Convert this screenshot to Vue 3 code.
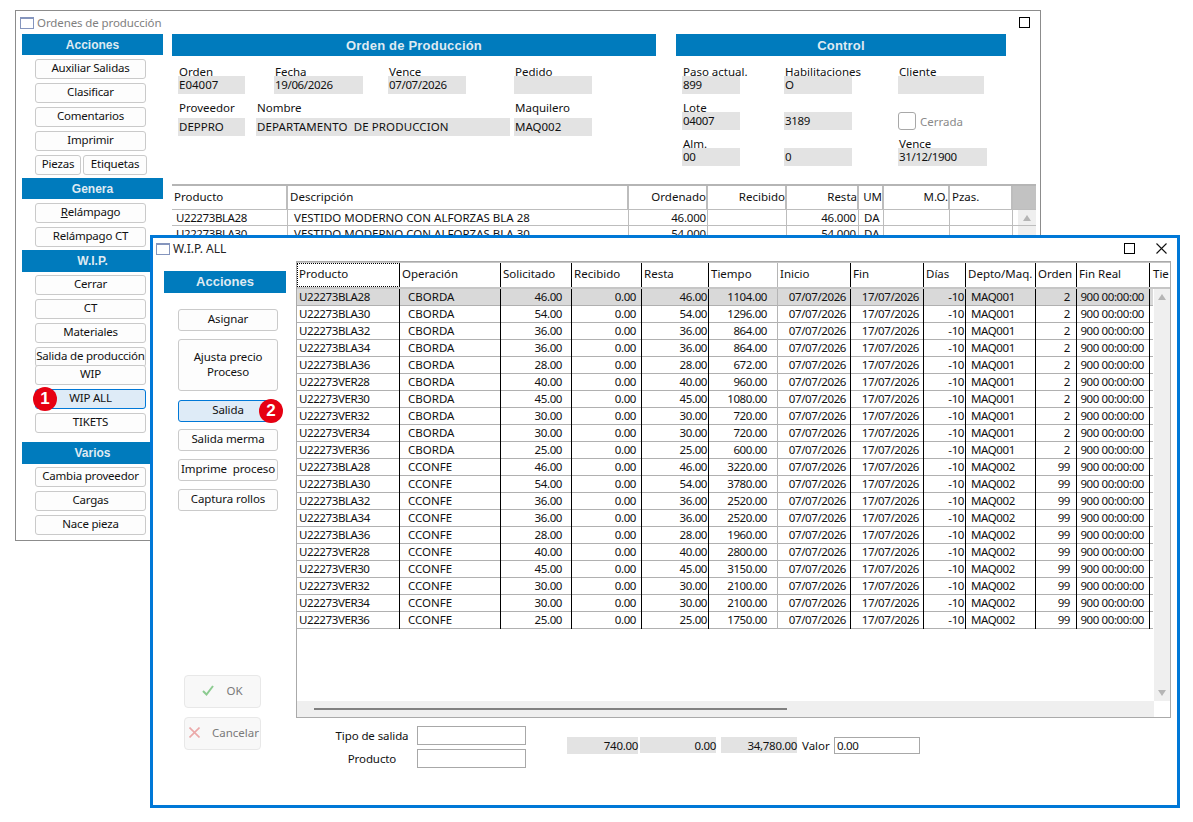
<script setup>
const acciones = ['Auxiliar Salidas', 'Clasificar', 'Comentarios', 'Imprimir']
const wipTop = ['Cerrar', 'CT', 'Materiales']
const varios = ['Cambia proveedor', 'Cargas', 'Nace pieza']

const ordenRows = [
  [
    { label: 'Orden', value: 'E04007', width: 67, left: 6 },
    { label: 'Fecha', value: '19/06/2026', width: 89, left: 29 },
    { label: 'Vence', value: '07/07/2026', width: 78, left: 25 },
    { label: 'Pedido', value: '', width: 78, left: 48 }
  ],
  [
    { label: 'Proveedor', value: 'DEPPRO', width: 67, left: 6 },
    { label: 'Nombre', value: 'DEPARTAMENTO  DE PRODUCCION', width: 254, left: 11 },
    { label: 'Maquilero', value: 'MAQ002', width: 78, left: 4 }
  ]
]

const isDate = (v) => /^[\d/]+$/.test(v)

const topHead = ['Producto', 'Descripción', 'Ordenado', 'Recibido', 'Resta', 'UM', 'M.O.', 'Pzas.']
const topRows = [
  ['U22273BLA28', 'VESTIDO MODERNO CON ALFORZAS BLA 28', '46.000', '', '46.000', 'DA', '', ''],
  ['U22273BLA30', 'VESTIDO MODERNO CON ALFORZAS BLA 30', '54.000', '', '54.000', 'DA', '', '']
]

const wipHead = ['Producto', 'Operación', 'Solicitado', 'Recibido', 'Resta', 'Tiempo', 'Inicio', 'Fin', 'Días', 'Depto/Maq.', 'Orden', 'Fin Real', 'Tie']
const tallas = [
  ['BLA28', 46], ['BLA30', 54], ['BLA32', 36], ['BLA34', 36], ['BLA36', 28],
  ['VER28', 40], ['VER30', 45], ['VER32', 30], ['VER34', 30], ['VER36', 25]
]

function makeRows(operacion, factor, maq, orden) {
  return tallas.map(([t, qty]) => [
    'U22273' + t, operacion, qty.toFixed(2), '0.00', qty.toFixed(2), (qty * factor).toFixed(2),
    '07/07/2026', '17/07/2026', '-10', maq, orden, '900 00:00:00'
  ])
}

const wipRows = [...makeRows('CBORDA', 24, 'MAQ001', '2'), ...makeRows('CCONFE', 70, 'MAQ002', '99')]
</script>

<template>
  <div class="desk">
    <!-- ventana de atras -->
    <section class="win win-back">
      <header class="titlebar back-title">
        <span class="win-icon"></span>
        <span class="title-text">Ordenes de producción</span>
        <span class="max-box"></span>
      </header>
      <div class="back-body">
        <aside class="side">
          <h3 class="band">Acciones</h3>
          <button v-for="b in acciones" :key="b" class="btn">{{ b }}</button>
          <div class="btn-pair">
            <button class="btn btn-piezas">Piezas</button>
            <button class="btn btn-etiq">Etiquetas</button>
          </div>
          <h3 class="band band-next">Genera</h3>
          <button class="btn"><span><u>R</u>elámpago</span></button>
          <button class="btn">Relámpago CT</button>
          <h3 class="band band-next band-tall">W.I.P.</h3>
          <button v-for="b in wipTop" :key="b" class="btn btn-snug">{{ b }}</button>
          <button class="btn">Salida de producción</button>
          <button class="btn btn-over">WIP</button>
          <button class="btn btn-on btn-badge">WIP ALL<span class="badge badge-1">1</span></button>
          <button class="btn">TIKETS</button>
          <h3 class="band band-varios">Varios</h3>
          <button v-for="b in varios" :key="b" class="btn btn-snug">{{ b }}</button>
        </aside>

        <div class="back-main">
          <div class="panels">
            <div class="panel-orden">
              <h3 class="band band-big">Orden de Producción</h3>
              <div class="field-rows">
                <div v-for="(row, i) in ordenRows" :key="i" class="field-row" :class="{ 'row-gap': i > 0 }">
                  <div v-for="f in row" :key="f.label" class="field" :style="{ width: f.width + 'px', marginLeft: f.left + 'px' }">
                    <label class="lbl">{{ f.label }}</label>
                    <div class="val" :class="{ 'val-low': i > 0, 'val-num': isDate(f.value), 'val-wide': f.label === 'Nombre' }">{{ f.value }}</div>
                  </div>
                </div>
              </div>
            </div>
            <div class="panel-control">
              <h3 class="band band-big">Control</h3>
              <div class="control-grid">
                <div class="field"><label class="lbl">Paso actual.</label><div class="val val-num">899</div></div>
                <div class="field"><label class="lbl">Habilitaciones</label><div class="val">O</div></div>
                <div class="field f-cliente"><label class="lbl">Cliente</label><div class="val"></div></div>
                <div class="field"><label class="lbl">Lote</label><div class="val val-num">04007</div></div>
                <div class="field"><label class="lbl">&nbsp;</label><div class="val val-num">3189</div></div>
                <div class="check-row"><span class="check"></span><span class="check-text">Cerrada</span></div>
                <div class="field"><label class="lbl">Alm.</label><div class="val val-num">00</div></div>
                <div class="field"><label class="lbl">&nbsp;</label><div class="val val-num">0</div></div>
                <div class="field f-vence"><label class="lbl">Vence</label><div class="val val-num">31/12/1900</div></div>
              </div>
            </div>
          </div>

          <div class="top-table">
            <div class="top-row top-head">
              <div v-for="h in topHead" :key="h" class="tc">{{ h }}</div>
              <div class="top-corner"></div>
            </div>
            <div v-for="(r, i) in topRows" :key="i" class="top-row top-data">
              <div v-for="(c, j) in r" :key="j" class="tc">{{ c }}</div>
              <div class="top-scroll"><span v-if="i === 0" class="arrow-up"></span></div>
            </div>
          </div>
        </div>
      </div>
    </section>

    <!-- ventana W.I.P. ALL -->
    <section class="win win-front">
      <header class="titlebar front-title">
        <span class="win-icon"></span>
        <span class="title-text dark">W.I.P. ALL</span>
        <span class="max-box front-max"></span>
        <svg class="close-x" width="11" height="11" viewBox="0 0 11 11"><path d="M0.5 0.5L10.5 10.5M10.5 0.5L0.5 10.5" stroke="#111" stroke-width="1.1" fill="none" /></svg>
      </header>
      <div class="front-body">
        <aside class="front-side">
          <h3 class="band band-front">Acciones</h3>
          <button class="btn2 first">Asignar</button>
          <button class="btn2 tall">Ajusta precio<br />Proceso</button>
          <button class="btn2 btn-on sal">Salida<span class="badge badge-2">2</span></button>
          <button class="btn2 merma">Salida merma</button>
          <button class="btn2">Imprime&nbsp; proceso</button>
          <button class="btn2">Captura rollos</button>
          <button class="btn-off ok-btn">
            <svg width="12" height="11" viewBox="0 0 12 11"><path d="M1 6L4.5 9.5L11 1" stroke="#8ccb90" stroke-width="2" fill="none" /></svg>
            <span>OK</span>
          </button>
          <button class="btn-off cancel-btn">
            <svg width="11" height="11" viewBox="0 0 11 11"><path d="M0.5 0.5L10.5 10.5M10.5 0.5L0.5 10.5" stroke="#eba9a9" stroke-width="1.6" fill="none" /></svg>
            <span>Cancelar</span>
          </button>
        </aside>

        <div class="front-main">
          <div class="grid-box">
            <div class="grid-area">
              <div class="g-row g-head">
                <div v-for="(h, i) in wipHead" :key="h" class="gc" :class="{ 'gc-focus': i === 0 }">{{ h }}</div>
              </div>
              <div v-for="(r, i) in wipRows" :key="i" class="g-row g-data" :class="{ 'g-sel': i === 0 }">
                <div v-for="(c, j) in r" :key="j" class="gc">{{ c }}</div>
              </div>
            </div>
            <div class="v-scroll"><span class="arrow-up"></span><span class="arrow-down"></span></div>
            <div class="h-scroll"><span class="h-thumb"></span></div>
          </div>

          <div class="foot">
            <div class="foot-form">
              <label class="foot-lbl">Tipo de salida</label><div class="foot-input"></div>
              <label class="foot-lbl">Producto</label><div class="foot-input"></div>
            </div>
            <div class="totals">
              <div class="total t1">740.00</div>
              <div class="total t2">0.00</div>
              <div class="total t3">34,780.00</div>
              <span class="valor">Valor</span>
              <div class="valor-input">0.00</div>
            </div>
          </div>
        </div>
      </div>
    </section>
  </div>
</template>

<style>
html, body { background: #fff; }
</style>

<style scoped>
.desk {
  position: relative;
  width: 1193px;
  height: 822px;
  overflow: hidden;
  background: #fff;
  font-family: "Noto Sans", "Liberation Sans", sans-serif;
  font-size: 11.5px;
  color: #111;
}
.win { position: absolute; box-sizing: border-box; background: #fff; overflow: hidden; }
.win-back { left: 15px; top: 10px; width: 1026px; height: 531px; border: 1px solid #8c8c8c; }
.win-front { left: 150px; top: 235px; width: 1030px; height: 573px; border: 3px solid #0078d7; }

.titlebar { display: flex; align-items: center; }
.back-title { height: 23px; padding-left: 4px; }
.front-title { height: 21px; padding-left: 3px; }
.win-icon {
  width: 14px; height: 12px; box-sizing: border-box; flex: none;
  border: 1px solid #8595bd; border-top-width: 2px; background: #fff;
}
.title-text { margin-left: 3px; color: #808080; letter-spacing: -0.1px; }
.title-text.dark { color: #222; font-size: 12px; letter-spacing: 0; }
.max-box { margin-left: auto; margin-right: 10px; width: 11px; height: 11px; box-sizing: border-box; border: 1px solid #000; }
.front-max { margin-right: 21px; }
.close-x { margin-right: 10px; flex: none; }

.back-body { display: flex; }
.side { width: 141px; margin-left: 6px; display: flex; flex-direction: column; align-items: flex-start; flex: none; }
.band {
  margin: 0; width: 100%; height: 21px; line-height: 22px; text-align: center;
  background: #007bbd; color: #dfeaf2;
  font-family: "Liberation Sans", Arial, sans-serif; font-size: 12px; font-weight: 700;
}
.band-next { margin-top: 3px; }
.band-tall { height: 22px; line-height: 23px; margin-bottom: -1px; }
.band-varios { margin-top: 9px; height: 22px; line-height: 23px; margin-bottom: -1px; }
.band-big { height: 22px; line-height: 23px; font-size: 13px; letter-spacing: 0.2px; }
.band-front { margin-left: 11px; width: 122px; height: 22px; line-height: 22px; font-size: 13px; }

.btn, .btn2, .btn-off {
  box-sizing: border-box; font: inherit; color: inherit; padding: 0;
  background: #fdfdfd; border: 1px solid #cacaca; border-radius: 3px;
  white-space: nowrap; display: flex; align-items: center; justify-content: center;
}
.btn { margin: 4px 0 0 13px; width: 111px; height: 20px; flex: none; padding-bottom: 3px; letter-spacing: -0.2px; }
.btn-over { margin-top: -2px; position: relative; }
.btn-pair { display: flex; gap: 2px; margin: 4px 0 0 13px; }
.btn-pair .btn { margin: 0; }
.btn-pair .btn-piezas { width: 46px; }
.btn-pair .btn-etiq { width: 64px; }
.btn-on { background: #deebf7; border-color: #0078d7; position: relative; overflow: visible; }
.badge {
  position: absolute; width: 24px; height: 24px; border-radius: 50%; background: #e60012; color: #fff;
  font-family: "Liberation Sans", Arial, sans-serif; font-weight: 700; font-size: 17px; line-height: 24px; text-align: center;
  letter-spacing: 0;
}
.badge-1 { left: -3px; top: -3px; }
.badge-2 { right: -6px; top: -2px; }

.back-main { margin-left: 9px; width: 864px; flex: none; }
.panels { display: flex; gap: 20px; height: 150px; }
.panel-orden { width: 484px; }
.panel-control { width: 330px; }
.field-rows { padding-top: 9px; }
.field-row { display: flex; }
.row-gap { margin-top: 7px; }
.field { box-sizing: border-box; }
.lbl { display: block; height: 14px; line-height: 14px; padding-left: 1px; white-space: nowrap; position: relative; z-index: 1; }
.val {
  height: 18px; line-height: 18px; margin-top: -3px; padding-left: 1px;
  background: #e3e3e3; white-space: pre; overflow: hidden;
}
.val-low { margin-top: 3px; }
.val-num { letter-spacing: -0.35px; }
.val-wide { letter-spacing: 0.1px; }

.control-grid {
  display: grid; grid-template-columns: 102px 114px 89px; grid-template-rows: 29px 29px 29px;
  row-gap: 7px; padding: 9px 0 0 6px;
}
.control-grid .field:nth-child(3n+1) .val { width: 57px; }
.control-grid .field:nth-child(3n+2) .val { width: 67px; }
.f-cliente .val { width: 85px; }
.check-row { display: flex; align-items: center; gap: 4px; padding-top: 11px; }
.check { width: 18px; height: 18px; box-sizing: border-box; border: 1px solid #a8a8a8; border-radius: 3px; }
.check-text { color: #8a8a8a; }

.top-table { width: 864px; border-top: 2px solid #b5b5b5; }
.top-row {
  display: grid; grid-template-columns: 116px 341px 79px 79px 72px 25px 66px 63px 23px;
  height: 16px; border-bottom: 1px solid #bdbdbd; box-sizing: border-box;
}
.top-head { height: 24px; }
.tc { border-right: 1px solid #bdbdbd; padding: 0 2px; white-space: nowrap; overflow: hidden; line-height: 15px; }
.top-head .tc { line-height: 22px; border-right-width: 2px; }
.top-head .tc:nth-child(3), .top-head .tc:nth-child(4), .top-head .tc:nth-child(5), .top-head .tc:nth-child(7) { text-align: right; padding-right: 0; }
.top-head .tc:nth-child(6) { padding: 0; text-align: right; }
.top-data .tc:nth-child(1) { padding-left: 4px; letter-spacing: -0.4px; }
.top-data .tc:nth-child(2) { padding-left: 6px; }
.top-data .tc:nth-child(3), .top-data .tc:nth-child(5) { text-align: right; padding-right: 1px; letter-spacing: -0.2px; }
.top-data .tc:nth-child(5) { padding-right: 2px; }
.top-data .tc:nth-child(6) { padding-left: 5px; }
.top-corner { background: #c2c2c2; }
.top-scroll { background: #efefef; position: relative; margin-left: 5px; }

.arrow-up, .arrow-down { position: absolute; left: 50%; margin-left: -4px; width: 0; height: 0; border-left: 4px solid transparent; border-right: 4px solid transparent; }
.arrow-up { top: 5px; border-bottom: 6px solid #b5b5b5; }
.arrow-down { bottom: 5px; border-top: 6px solid #b5b5b5; }

.front-body { display: flex; }
.front-side { width: 143px; flex: none; display: flex; flex-direction: column; align-items: flex-start; padding-top: 12px; }
.btn2 { width: 100px; height: 22px; margin: 8px 0 0 25px; flex: none; padding-bottom: 4px; letter-spacing: -0.1px; }
.btn2.first { margin-top: 16px; }
.btn2.tall { height: 52px; line-height: 15px; text-align: center; padding-bottom: 2px; }
.btn2.sal { margin-top: 9px; }
.btn2.merma { margin-top: 7px; }
.btn-off {
  width: 77px; height: 33px; margin-left: 31px; gap: 12px; flex: none; padding-bottom: 3px;
  background: #f8f8f8; border-color: #e8e8e8; color: #7a7a7a; border-radius: 4px;
}
.ok-btn { margin-top: 164px; }
.cancel-btn { margin-top: 9px; justify-content: flex-start; padding-left: 4px; }

.front-main { flex: 1; min-width: 0; padding-top: 2px; }
.grid-box {
  box-sizing: border-box; width: 875px; height: 457px; border: 1px solid #aaa;
  display: grid; grid-template-columns: 857px 1fr; grid-template-rows: 439px 1fr;
}
.grid-area { grid-column: 1 / 3; grid-row: 1; overflow: hidden; }
.g-row {
  display: grid; height: 17px; box-sizing: border-box; border-bottom: 1px solid #b0b0b0;
  grid-template-columns: 103px 101px 71px 70px 67px 69px 73px 73px 42px 70px 41px 73px 20px;
}
.g-data { width: 856px; grid-template-columns: 103px 101px 71px 70px 67px 69px 73px 73px 42px 70px 41px 73px; }
.g-head { height: 27px; border-bottom: 2px solid #c6c6c6; border-top: 1px solid #c6c6c6; }
.gc { box-sizing: border-box; border-right: 1px solid #000; line-height: 16px; white-space: nowrap; overflow: hidden; margin-bottom: -1px; padding-left: 2px; letter-spacing: -0.4px; }
.g-head .gc { line-height: 22px; padding-left: 2px; margin-bottom: 0; letter-spacing: 0; }
.gc-focus { outline: 1px dotted #000; outline-offset: -1px; }
.g-head .gc:nth-child(13) { border-right: none; padding-left: 3px; }
.gc:nth-child(6) { border-right-color: #b5b5b5; }
.g-data .gc:nth-child(2) { padding-left: 8px; letter-spacing: 0; }
.g-data .gc:nth-child(3) { text-align: right; padding-right: 9px; }
.g-data .gc:nth-child(4) { text-align: right; padding-right: 5px; }
.g-data .gc:nth-child(5) { text-align: right; padding-right: 1px; }
.g-data .gc:nth-child(6) { text-align: right; padding-right: 10px; }
.g-data .gc:nth-child(7) { text-align: right; padding-right: 4px; }
.g-data .gc:nth-child(8) { text-align: right; padding-right: 4px; }
.g-data .gc:nth-child(9) { text-align: right; padding-right: 1px; }
.g-data .gc:nth-child(10) { padding-left: 5px; }
.g-data .gc:nth-child(11) { text-align: right; padding-right: 6px; }
.g-data .gc:nth-child(12) { text-align: right; padding-right: 5px; }
.g-sel { background: #d9d9d9; }
.v-scroll { grid-column: 2; grid-row: 1; background: #efefef; position: relative; margin-top: 27px; }
.h-scroll { grid-column: 1; grid-row: 2; background: #efefef; display: flex; align-items: center; padding-left: 17px; }
.h-thumb { width: 473px; height: 2px; background: #808080; }

.foot { display: flex; align-items: flex-start; margin-top: 8px; }
.foot-form { display: grid; grid-template-columns: 87px 109px; margin-left: 34px; row-gap: 4px; align-items: center; }
.foot-lbl { text-align: center; padding-right: 3px; letter-spacing: -0.1px; }
.foot-input { height: 19px; box-sizing: border-box; border: 1px solid #a8a8a8; background: #fff; }
.totals { display: flex; margin-left: 41px; margin-top: 11px; align-items: flex-start; letter-spacing: -0.3px; }
.total { height: 17px; line-height: 17px; background: #e3e3e3; text-align: right; box-sizing: border-box; }
.t1 { width: 71px; }
.t2 { width: 76px; margin-left: 2px; height: 16px; }
.t3 { width: 76px; margin-left: 5px; height: 16px; }
.valor { margin-left: 5px; width: 32px; line-height: 18px; letter-spacing: 0; }
.valor-input { width: 86px; height: 17px; line-height: 15px; box-sizing: border-box; border: 1px solid #a8a8a8; padding-left: 2px; }
</style>
